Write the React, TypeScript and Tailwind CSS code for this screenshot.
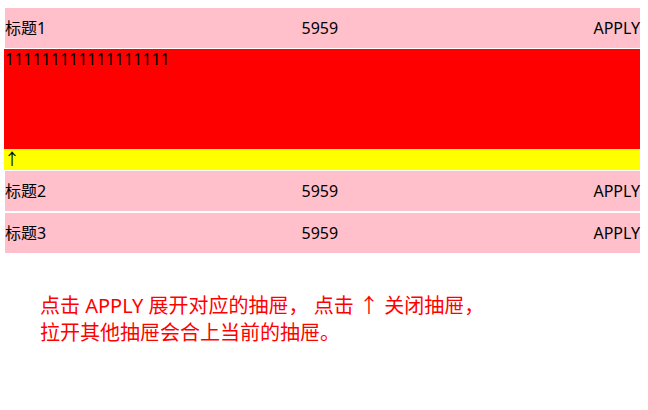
import React from "react";

const font = { fontFamily: '"Noto Sans", "Noto Sans CJK SC", sans-serif' };

function Row({ title, extra }: { title: string; extra: string }) {
  return (
    <div className={`ml-px flex h-10 items-center justify-between bg-[#ffc0cb] text-[16px] text-black ${extra}`}>
      <span>{title}</span>
      <span>5959</span>
      <span>APPLY</span>
    </div>
  );
}

export default function App() {
  return (
    <div className="min-h-[410px] bg-white pl-1 pr-2 pt-2" style={font}>
      <Row title="标题1" extra="mb-px" />
      <div className="h-[100px] bg-[#ff0000] pl-px text-[16px] leading-[21px] text-black">111111111111111111</div>
      <div className="mb-px h-[21px] bg-[#ffff00] text-[16px] leading-[21px] text-black">↑</div>
      <Row title="标题2" extra="mb-0.5" />
      <Row title="标题3" extra="" />
      <p className="ml-9 mt-[39px] text-[20px] leading-[27px] text-[#ff0000]">
        点击 APPLY 展开对应的抽屉， 点击 ↑ 关闭抽屉，
        <br />
        拉开其他抽屉会合上当前的抽屉。
      </p>
    </div>
  );
}
